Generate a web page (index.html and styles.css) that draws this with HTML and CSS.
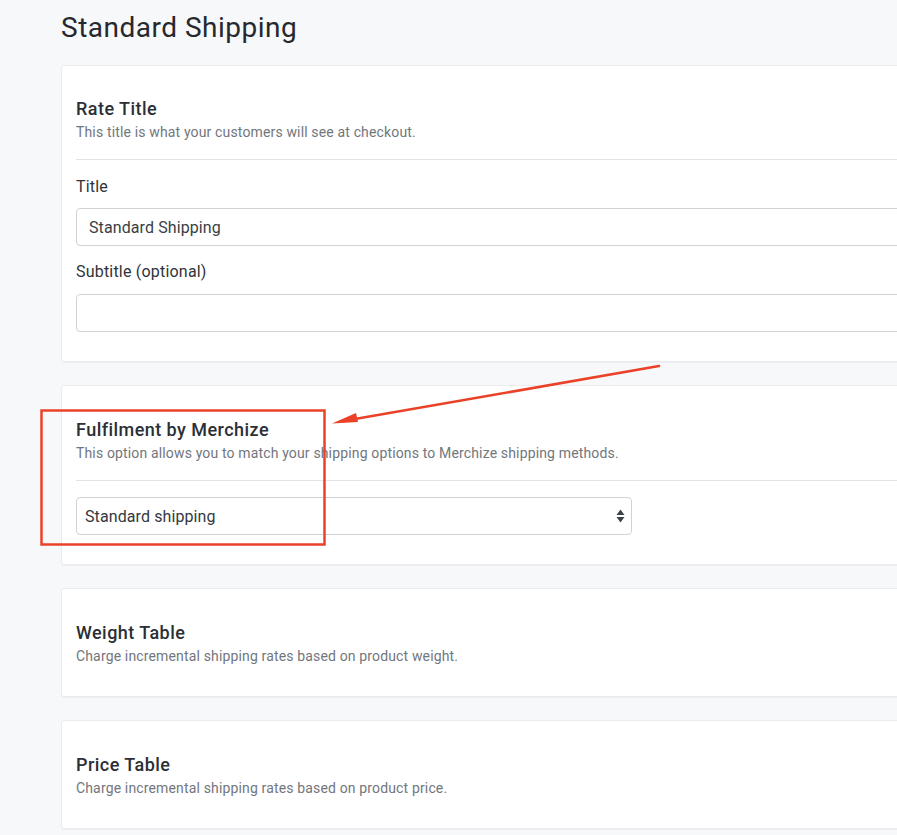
FILE: index.html
```html
<!DOCTYPE html>
<html lang="en">
<head>
<meta charset="utf-8">
<title>Standard Shipping</title>
<link rel="stylesheet" href="styles.css">
</head>
<body>
<main class="page">
  <h1 class="page-title">Standard Shipping</h1>

  <section class="card card--first">
    <div class="card-head">
      <h2 class="card-title">Rate Title</h2>
      <p class="card-desc">This title is what your customers will see at checkout.</p>
    </div>
    <div class="card-body">
      <label class="field-label" for="rate-title">Title</label>
      <input class="field-input" id="rate-title" type="text" value="Standard Shipping">
      <label class="field-label field-label--next" for="rate-subtitle">Subtitle (optional)</label>
      <input class="field-input" id="rate-subtitle" type="text" value="">
    </div>
  </section>

  <section class="card">
    <div class="card-head">
      <h2 class="card-title">Fulfilment by Merchize</h2>
      <p class="card-desc">This option allows you to match your shipping options to Merchize shipping methods.</p>
    </div>
    <div class="card-body">
      <div class="select">
        <span class="select-value">Standard shipping</span>
        <svg class="select-arrows" width="9" height="16" viewBox="0 0 9 16" aria-hidden="true">
          <path d="M4.5 1.5 L8.5 7 L0.5 7 Z" fill="#3d4249"/>
          <path d="M4.5 14.5 L8.5 9 L0.5 9 Z" fill="#3d4249"/>
        </svg>
      </div>
    </div>
  </section>

  <section class="card">
    <div class="card-head card-head--only">
      <h2 class="card-title">Weight Table</h2>
      <p class="card-desc">Charge incremental shipping rates based on product weight.</p>
    </div>
  </section>

  <section class="card">
    <div class="card-head card-head--only">
      <h2 class="card-title">Price Table</h2>
      <p class="card-desc">Charge incremental shipping rates based on product price.</p>
    </div>
  </section>
</main>

<!-- red annotation drawn over the page -->
<svg class="annotation" width="897" height="835" viewBox="0 0 897 835" aria-hidden="true">
  <rect x="41.5" y="410.5" width="283" height="134" fill="none" stroke="#ea4128" stroke-width="2.5"/>
  <line x1="659" y1="366" x2="352" y2="419.5" stroke="#ea4128" stroke-width="2.6" stroke-linecap="round"/>
  <polygon points="332,423.5 356,413 358,422" fill="#ea4128"/>
</svg>
</body>
</html>
```

FILE: styles.css
```css
html, body {
  margin: 0;
  padding: 0;
}

body {
  background: #f7f8fa;
  font-family: Roboto, "Noto Sans", "Liberation Sans", sans-serif;
  color: #2b2f36;
  overflow: hidden;
  width: 897px;
  height: 835px;
  position: relative;
}

.page {
  padding: 0 0 0 61px;
  display: flex;
  flex-direction: column;
  gap: 23px;
}

.page-title {
  margin: 10px 0 -3px 0;
  font-size: 28px;
  line-height: 35px;
  font-weight: 400;
  color: #25282d;
  letter-spacing: 0.5px;
}

.card {
  background: #ffffff;
  border: 1px solid #e9ebee;
  border-radius: 3px;
  box-shadow: 0 1px 1px rgba(0, 0, 0, 0.04);
  width: 860px;
  box-sizing: border-box;
  padding: 32px 14px 29px 14px;
}

.card--first {
  padding-top: 31px;
}

.card-head {
  padding-bottom: 16px;
  border-bottom: 1px solid #e3e4e6;
}

.card-head--only {
  border-bottom: none;
  padding-bottom: 0;
}

.card-title {
  margin: 0;
  font-size: 18px;
  line-height: 24px;
  font-weight: 500;
  color: #2b2f36;
  letter-spacing: 0.45px;
}

.card-desc {
  margin: 0;
  font-size: 14px;
  line-height: 22px;
  color: #72767d;
  letter-spacing: 0.15px;
}

.card-body {
  display: flex;
  flex-direction: column;
  padding-top: 16px;
}

.field-label {
  font-size: 16px;
  line-height: 22px;
  color: #2f3338;
  margin-bottom: 10px;
  letter-spacing: 0.2px;
}

.field-label--next {
  margin-top: 15px;
  margin-bottom: 11px;
}

.field-input {
  box-sizing: border-box;
  height: 38px;
  width: 100%;
  border: 1px solid #cfd3d8;
  border-radius: 4px;
  padding: 0 12px;
  font-family: inherit;
  font-size: 16px;
  letter-spacing: 0.1px;
  color: #3a3e44;
  background: #fff;
  outline: none;
}

.select {
  box-sizing: border-box;
  width: 556px;
  height: 38px;
  border: 1px solid #cfd3d8;
  border-radius: 4px;
  display: flex;
  align-items: center;
  justify-content: space-between;
  padding: 0 6px 0 8px;
  font-size: 16px;
  letter-spacing: 0.1px;
  color: #34383e;
  background: #fff;
}

.annotation {
  position: absolute;
  left: 0;
  top: 0;
  pointer-events: none;
}
```
